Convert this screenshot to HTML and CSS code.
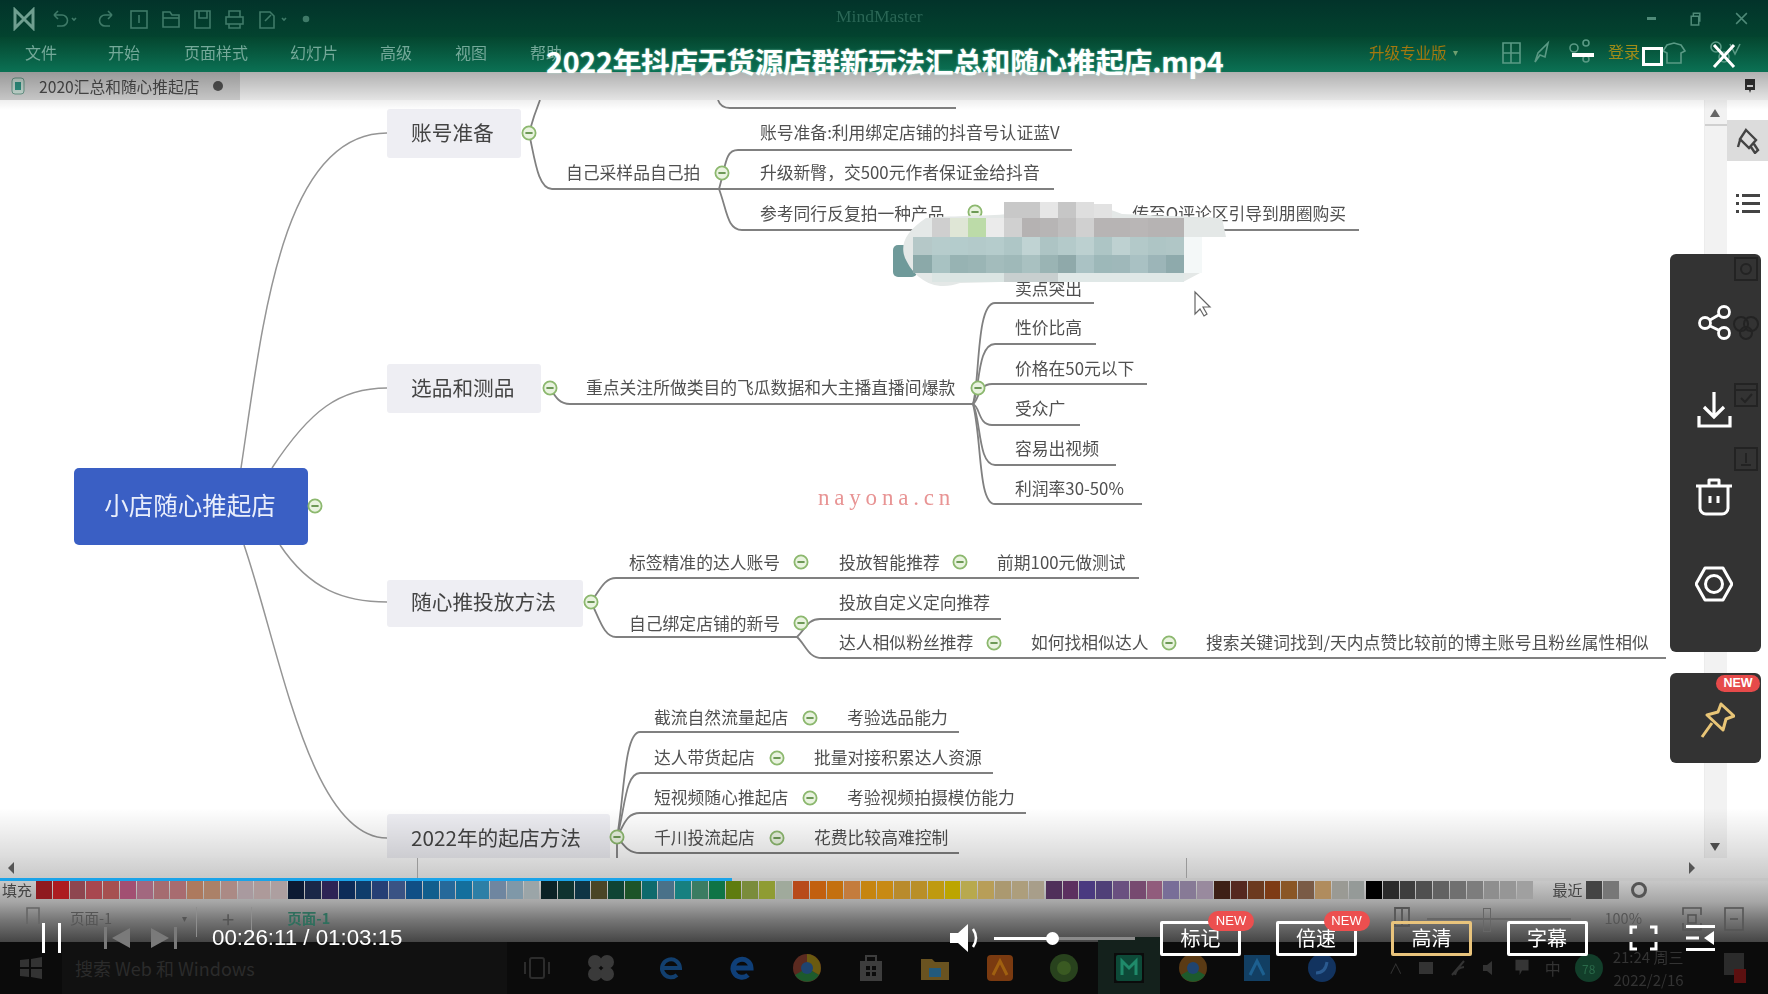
FILE: index.html
```html
<!DOCTYPE html>
<html lang="zh-CN">
<head>
<meta charset="utf-8">
<title>MindMaster</title>
<link rel="stylesheet" href="styles.css">
</head>
<body>
<div class="app">
  <header class="titlebar">
    <svg class="logo" viewBox="0 0 24 24"><path d="M3 21V3l9 9 9-9v18l-9-9z" fill="none" stroke="#6f9f90" stroke-width="3"/></svg>
    <svg class="quick" viewBox="0 0 300 24" fill="none" stroke="#3f7a68" stroke-width="1.6">
      <path d="M4 8h8a5 5 0 0 1 0 11H7M4 8l4-4M4 8l4 4"/><path d="M22 11l2 2 2-2" />
      <path d="M62 8h-7a5 5 0 0 0 0 11h5M62 8l-4-4M62 8l-4 4"/>
      <g transform="translate(-10 0)">
        <rect x="91" y="4" width="16" height="17"/><path d="M99 8v8"/>
        <path d="M123 20V5h7l2 3h7v12z"/><path d="M123 11h16"/>
        <path d="M155 4h15v17h-15zM159 4v7h8V4"/>
        <rect x="186" y="10" width="17" height="7"/><path d="M189 10V4h11v6M189 17v4h11v-4"/>
        <path d="M220 5h10l4 4v12h-14zM225 14l6-6"/><path d="M242 11l2 2 2-2"/>
      </g>
      <circle cx="256" cy="12" r="2.5" fill="#3f7a68"/>
    </svg>
    <span class="apptitle">MindMaster</span>
    <div class="winctl">
      <span class="winmin"></span>
      <svg viewBox="0 0 12 14" fill="none" stroke="#4f8a78" stroke-width="1.4"><path d="M2 5h7v8H2zM4 5V2h6v8"/></svg>
      <svg viewBox="0 0 12 14" fill="none" stroke="#4f8a78" stroke-width="1.4"><path d="M1 2l10 10M11 2L1 12"/></svg>
    </div>
  </header>

  <nav class="menubar">
    <span class="menu m1">文件</span><span class="menu m2">开始</span><span class="menu m3">页面样式</span><span class="menu m4">幻灯片</span><span class="menu m5">高级</span><span class="menu m6">视图</span><span class="menu m7">帮助</span>
    <span class="upgrade">升级专业版</span><span class="caret">▾</span>
    <svg class="menuicons" viewBox="0 0 250 26" fill="none" stroke="#5a9a85" stroke-width="1.6">
      <path d="M1 4h17v20H1zM1 14h17M9 4v20"/><path d="M33 23l3-9 10-10-3 14-5-2z"/>
      <circle cx="72" cy="9" r="4"/><circle cx="84" cy="4" r="3"/><circle cx="84" cy="20" r="3"/>
      <path d="M179 6l-7-2-7 2-4 6 4 2v10h14V14l4-2z"/>
      <circle cx="214" cy="8" r="5"/><circle cx="222" cy="18" r="5"/><path d="M228 5l5 10 5-10"/>
    </svg>
    <span class="login">登录</span>
  </nav>

  <div class="tabbar">
    <div class="tab">
      <svg class="tabicon" viewBox="0 0 16 18"><rect x="2" y="1" width="12" height="16" rx="3" fill="#cfe5dc" stroke="#6f9f90"/><rect x="5" y="5" width="6" height="8" fill="#2f9a88"/></svg>
      <span class="tabtext">2020汇总和随心推起店</span>
      <span class="tabdot"></span>
    </div>
    <svg class="pinmark" viewBox="0 0 12 14"><path d="M1 0h10v11H7l-1 3-1-3H1z" fill="#333"/><rect x="3" y="6" width="6" height="2" fill="#eee"/></svg>
  </div>

  <main class="work">
    <svg class="map" viewBox="0 100 1704 758" width="1704" height="758">
      <defs>
        <g id="fold"><circle r="6.6" fill="#e9f3df" stroke="#8cb86e" stroke-width="1.8"/><path d="M-3.6 0h7.2" stroke="#5f8f47" stroke-width="1.8"/></g>
      </defs>

      <g class="edge0">
        <path d="M241 468C262 330 280 133 387 133"/>
        <path d="M272 468C310 410 340 388 387 388"/>
        <path d="M280 545C310 590 345 602 387 602"/>
        <path d="M244 545C280 650 310 838 387 838"/>
      </g>

      <g class="edge">
        <path d="M529 133Q534 115 540 100"/>
        <path d="M529 133C535 160 538 189 552 189H719"/>
        <path d="M718 100C720 106 724 108 730 108H956"/>
        <path d="M719 189C726 165 725 150 738 150H1072"/>
        <path d="M719 189H1054"/>
        <path d="M719 189C727 210 727 230 742 230H1359"/>

        <path d="M550 388C556 398 560 404 570 404H973"/>
        <path d="M973 404C980 380 976 303 995 303H1094"/>
        <path d="M973 404C980 390 977 344 995 344H1096"/>
        <path d="M973 404C979 400 978 384 992 384H1147"/>
        <path d="M973 404C980 406 978 425 992 425H1080"/>
        <path d="M973 404C981 420 978 465 995 465H1116"/>
        <path d="M973 404C982 440 978 504 995 504H1142"/>

        <path d="M591 602C600 590 604 578 616 578H1139"/>
        <path d="M591 602C600 620 604 637 616 637H797"/>
        <path d="M797 637C806 628 808 619 820 619H1001"/>
        <path d="M797 637C806 645 808 658 822 658H1666"/>

        <path d="M617 837C624 800 624 732 640 732H959"/>
        <path d="M617 837C625 810 625 773 640 773H993"/>
        <path d="M617 837C624 825 626 813 640 813H1026"/>
        <path d="M617 837C624 845 628 853 640 853H959"/>
        <path d="M617 837V858"/>
      </g>

      <rect class="root" x="74" y="468" width="234" height="77" rx="5"/>
      <text class="troot" x="190" y="515" text-anchor="middle">小店随心推起店</text>

      <rect class="topic" x="387" y="109" width="134" height="49" rx="3"/>
      <rect class="topic" x="387" y="364" width="154" height="49" rx="3"/>
      <rect class="topic" x="387" y="580" width="196" height="47" rx="3"/>
      <rect class="topic" x="387" y="814" width="223" height="48" rx="3"/>
      <text class="tt" x="411" y="141">账号准备</text>
      <text class="tt" x="411" y="396">选品和测品</text>
      <text class="tt" x="411" y="610">随心推投放方法</text>
      <text class="tt" x="411" y="846">2022年的起店方法</text>

      <g class="t">
        <text x="566" y="179">自己采样品自己拍</text>
        <text x="760" y="139">账号准备:利用绑定店铺的抖音号认证蓝V</text>
        <text x="760" y="179">升级新臀，交500元作者保证金给抖音</text>
        <text x="760" y="220">参考同行反复拍一种产品</text>
        <text x="1346" y="220" text-anchor="end">传至Q评论区引导到朋圈购买</text>

        <text x="586" y="394">重点关注所做类目的飞瓜数据和大主播直播间爆款</text>
        <text x="1015" y="295">卖点突出</text>
        <text x="1015" y="334">性价比高</text>
        <text x="1015" y="375">价格在50元以下</text>
        <text x="1015" y="415">受众广</text>
        <text x="1015" y="455">容易出视频</text>
        <text x="1015" y="495">利润率30-50%</text>

        <text x="629" y="569">标签精准的达人账号</text>
        <text x="839" y="569">投放智能推荐</text>
        <text x="997" y="569">前期100元做测试</text>
        <text x="629" y="630">自己绑定店铺的新号</text>
        <text x="839" y="609">投放自定义定向推荐</text>
        <text x="839" y="649">达人相似粉丝推荐</text>
        <text x="1031" y="649">如何找相似达人</text>
        <text x="1206" y="649">搜索关键词找到/天内点赞比较前的博主账号且粉丝属性相似</text>

        <text x="654" y="724">截流自然流量起店</text>
        <text x="847" y="724">考验选品能力</text>
        <text x="654" y="764">达人带货起店</text>
        <text x="814" y="764">批量对接积累达人资源</text>
        <text x="654" y="804">短视频随心推起店</text>
        <text x="847" y="804">考验视频拍摄模仿能力</text>
        <text x="654" y="844">千川投流起店</text>
        <text x="814" y="844">花费比较高难控制</text>
      </g>

      <use href="#fold" x="315" y="506"/>
      <use href="#fold" x="529" y="133"/>
      <use href="#fold" x="722" y="173"/>
      <use href="#fold" x="975" y="212"/>
      <use href="#fold" x="550" y="388"/>
      <use href="#fold" x="978" y="388"/>
      <use href="#fold" x="591" y="602"/>
      <use href="#fold" x="801" y="562"/>
      <use href="#fold" x="960" y="562"/>
      <use href="#fold" x="801" y="623"/>
      <use href="#fold" x="994" y="643"/>
      <use href="#fold" x="1169" y="643"/>
      <use href="#fold" x="617" y="837"/>
      <use href="#fold" x="810" y="718"/>
      <use href="#fold" x="777" y="758"/>
      <use href="#fold" x="810" y="798"/>
      <use href="#fold" x="777" y="838"/>

      <g class="mosaic">
        <rect x="893" y="245" width="24" height="32" rx="5" fill="#6f9a9a"/>
        <path d="M926 218C945 216 985 216 1010 214L1065 202C1085 202 1105 207 1122 214L1222 218 1226 237 1200 237 1200 273 1183 282 1000 282 960 283C935 292 915 280 905 258 900 245 905 232 926 218Z" fill="#e4e8e7"/>
        <g fill="#c8c8c8">
          <rect x="1004" y="202" width="18" height="16"/><rect x="1022" y="202" width="18" height="16"/>
          <rect x="1040" y="202" width="18" height="16" fill="#e6e6e6"/><rect x="1058" y="202" width="18" height="16" fill="#c6c6c6"/>
          <rect x="1076" y="202" width="18" height="16" fill="#dedede"/><rect x="1094" y="204" width="18" height="14" fill="#e2e2e2"/>
          <rect x="932" y="218" width="18" height="19" fill="#cfcfcf"/><rect x="950" y="218" width="18" height="19" fill="#dfe6d6"/>
          <rect x="968" y="218" width="18" height="19" fill="#bcdba8"/><rect x="986" y="218" width="18" height="19" fill="#ebebeb"/>
          <rect x="1004" y="218" width="18" height="19" fill="#d0d0d0"/><rect x="1022" y="218" width="18" height="19" fill="#b5b2b2"/>
          <rect x="1040" y="218" width="18" height="19" fill="#b7b5b5"/><rect x="1058" y="218" width="18" height="19" fill="#bfbebe"/>
          <rect x="1076" y="218" width="18" height="19" fill="#d0d0d0"/><rect x="1094" y="218" width="18" height="19" fill="#b7b4b4"/>
          <rect x="1112" y="218" width="18" height="19" fill="#b7b4b4"/><rect x="1130" y="218" width="18" height="19" fill="#b9b6b6"/>
          <rect x="1148" y="218" width="18" height="19" fill="#b6b3b3"/><rect x="1166" y="218" width="18" height="19" fill="#b6b3b3"/>
        </g>
        <g>
          <rect x="913" y="237" width="19" height="18" fill="#b5c8c8"/><rect x="932" y="237" width="18" height="18" fill="#b6cccc"/>
          <rect x="950" y="237" width="18" height="18" fill="#b4cccc"/><rect x="968" y="237" width="18" height="18" fill="#b3caca"/>
          <rect x="986" y="237" width="18" height="18" fill="#b5cccc"/><rect x="1004" y="237" width="18" height="18" fill="#aec6c6"/>
          <rect x="1022" y="237" width="18" height="18" fill="#c0d3d3"/><rect x="1040" y="237" width="18" height="18" fill="#adc4c4"/>
          <rect x="1058" y="237" width="18" height="18" fill="#b4caca"/><rect x="1076" y="237" width="18" height="18" fill="#bcd0d0"/>
          <rect x="1094" y="237" width="18" height="18" fill="#adc5c5"/><rect x="1112" y="237" width="18" height="18" fill="#bed1d1"/>
          <rect x="1130" y="237" width="18" height="18" fill="#b3c9c9"/><rect x="1148" y="237" width="18" height="18" fill="#aec5c5"/>
          <rect x="1166" y="237" width="18" height="18" fill="#b0c6c6"/><rect x="1184" y="237" width="18" height="36" fill="#f4f8f8"/>
          <rect x="913" y="255" width="19" height="18" fill="#8ba9a9"/><rect x="932" y="255" width="18" height="18" fill="#a8c2c2"/>
          <rect x="950" y="255" width="18" height="18" fill="#97b3b3"/><rect x="968" y="255" width="18" height="18" fill="#9ab5b5"/>
          <rect x="986" y="255" width="18" height="18" fill="#a3bcbc"/><rect x="1004" y="255" width="18" height="18" fill="#9fb9b9"/>
          <rect x="1022" y="255" width="18" height="18" fill="#a9c1c1"/><rect x="1040" y="255" width="18" height="18" fill="#9ab4b4"/>
          <rect x="1058" y="255" width="18" height="18" fill="#8fa9aa"/><rect x="1076" y="255" width="18" height="18" fill="#aac2c4"/>
          <rect x="1094" y="255" width="18" height="18" fill="#9db8b9"/><rect x="1112" y="255" width="18" height="18" fill="#9fb8ba"/>
          <rect x="1130" y="255" width="18" height="18" fill="#a9c1c3"/><rect x="1148" y="255" width="18" height="18" fill="#9cb5b8"/>
          <rect x="1166" y="255" width="18" height="18" fill="#8eaaac"/>
          <rect x="932" y="273" width="72" height="9" fill="#dbe5e3"/><rect x="1004" y="273" width="54" height="9" fill="#c8cfcf"/>
          <rect x="1058" y="273" width="126" height="9" fill="#e0e8e7"/>
        </g>
      </g>

      <path class="cursor" d="M1195 292v22l5-5 4 7 3-2-4-7h7z"/>
      <text class="mark" x="818" y="505">nayona.cn</text>
    </svg>

    <div class="vscroll">
      <svg class="vs-up" viewBox="0 0 12 10"><path d="M6 1l5 8H1z" fill="#666"/></svg>
      <span class="vs-rule"></span>
      <span class="vs-grow"></span>
      <svg class="vs-down" viewBox="0 0 12 10"><path d="M6 9L1 1h10z" fill="#555"/></svg>
    </div>

    <aside class="sidetools">
      <div class="tool-on">
        <svg viewBox="0 0 24 26" fill="none" stroke="#444" stroke-width="2.4"><path d="M10 2l10 10-7 8-9-9zM4 12l-2 7M18 16l4 6-3 3-4-6"/></svg>
      </div>
      <svg class="tool-list" viewBox="0 0 24 22" fill="#444"><rect x="6" y="1" width="18" height="3"/><rect x="6" y="9" width="18" height="3"/><rect x="6" y="17" width="18" height="3"/><rect y="1" width="3" height="3"/><rect y="9" width="3" height="3"/><rect y="17" width="3" height="3"/></svg>
    </aside>
  </main>

  <section class="bottom">
    <div class="hscroll">
      <svg class="hs-left" viewBox="0 0 8 12"><path d="M7 0L1 6l6 6z" fill="#555"/></svg>
      <span class="hs-mark1"></span>
      <span class="hs-mark2"></span>
      <svg class="hs-right" viewBox="0 0 8 12"><path d="M1 0l6 6-6 6z" fill="#555"/></svg>
    </div>
    <div class="progress"><div class="progress-fill"></div></div>
    <div class="palette">
      <span class="fill-label">填充</span>
      <div class="swatches">
        <i style="background:#8f1a1f"></i><i style="background:#ad1c20"></i><i style="background:#8e4650"></i><i style="background:#a8474f"></i><i style="background:#a65050"></i><i style="background:#a24f72"></i><i style="background:#a2687f"></i><i style="background:#a56c70"></i><i style="background:#a86c70"></i><i style="background:#ad7a5e"></i><i style="background:#ab8168"></i><i style="background:#ab8a85"></i><i style="background:#a99a9f"></i><i style="background:#ad9a9a"></i><i style="background:#ad9fa0"></i>
      </div>
      <div class="swatches">
        <i style="background:#0c1a33"></i><i style="background:#1a2747"></i><i style="background:#2d2355"></i><i style="background:#0d2c58"></i><i style="background:#0f3d6b"></i><i style="background:#263f75"></i><i style="background:#3a5384"></i><i style="background:#104f86"></i><i style="background:#115e8d"></i><i style="background:#26699a"></i><i style="background:#146f9d"></i><i style="background:#2d7fa6"></i><i style="background:#6f86a0"></i><i style="background:#7f98a8"></i><i style="background:#9ba5a8"></i>
      </div>
      <div class="swatches">
        <i style="background:#0b2226"></i><i style="background:#0f3330"></i><i style="background:#0f3545"></i><i style="background:#4a4526"></i><i style="background:#0f4434"></i><i style="background:#1d5428"></i><i style="background:#0f6a6c"></i><i style="background:#4a7189"></i><i style="background:#178080"></i><i style="background:#3b7c62"></i><i style="background:#0f7446"></i><i style="background:#5f7c10"></i><i style="background:#7a8c3c"></i><i style="background:#8f9c33"></i><i style="background:#a0aa9c"></i>
      </div>
      <div class="swatches">
        <i style="background:#b84a1a"></i><i style="background:#c2600f"></i><i style="background:#c4700f"></i><i style="background:#c47c3d"></i><i style="background:#c68510"></i><i style="background:#c88a14"></i><i style="background:#b98b2c"></i><i style="background:#b98f28"></i><i style="background:#bf9a10"></i><i style="background:#bca500"></i><i style="background:#b8a94e"></i><i style="background:#b89e58"></i><i style="background:#ab9970"></i><i style="background:#ad9e7c"></i><i style="background:#a89e8a"></i>
      </div>
      <div class="swatches">
        <i style="background:#50305a"></i><i style="background:#5c3060"></i><i style="background:#4a3a80"></i><i style="background:#504078"></i><i style="background:#6a5080"></i><i style="background:#774a70"></i><i style="background:#915c7c"></i><i style="background:#786e98"></i><i style="background:#877a96"></i><i style="background:#998a9e"></i>
      </div>
      <div class="swatches">
        <i style="background:#3e2016"></i><i style="background:#55281f"></i><i style="background:#6c3a1f"></i><i style="background:#7e3b15"></i><i style="background:#8a5625"></i><i style="background:#7a5b46"></i><i style="background:#b08c5e"></i><i style="background:#9a9a94"></i><i style="background:#959a98"></i>
      </div>
      <div class="swatches">
        <i style="background:#000"></i><i style="background:#2a2a2a"></i><i style="background:#3e3e3e"></i><i style="background:#505050"></i><i style="background:#626262"></i><i style="background:#707070"></i><i style="background:#7d7d7d"></i><i style="background:#8e8e8e"></i><i style="background:#969696"></i><i style="background:#a0a0a0"></i>
      </div>
      <span class="recent">最近</span>
      <div class="swatches">
        <i style="background:#444"></i><i style="background:#777"></i>
      </div>
      <svg class="wheel" viewBox="0 0 18 18"><circle cx="9" cy="9" r="6.5" fill="none" stroke="#555" stroke-width="3"/></svg>
    </div>
    <div class="statusbar">
      <svg class="st-page" viewBox="0 0 14 18"><path d="M1 17V1h12v16" fill="none" stroke="#666" stroke-width="1.6"/></svg>
      <span class="st-name">页面-1</span>
      <span class="st-caret">▾</span>
      <span class="st-sep"></span>
      <span class="st-plus">+</span>
      <span class="st-sep"></span>
      <span class="st-tab">页面-1</span>
      <span class="st-grow"></span>
      <svg class="st-icon" viewBox="0 0 18 20" fill="none" stroke="#555" stroke-width="1.8"><path d="M2 1h14v18H2zM9 1v18"/></svg>
      <span class="st-zoom"></span>
      <span class="st-pct">100%</span>
      <svg class="st-fit" viewBox="0 0 20 24" fill="none" stroke="#555" stroke-width="1.6"><path d="M1 8V1h18v7M1 16v7h18v-7"/><rect x="6" y="8" width="8" height="8"/></svg>
      <svg class="st-full" viewBox="0 0 20 24" fill="none" stroke="#555" stroke-width="1.6"><rect x="1" y="1" width="18" height="22"/><path d="M6 12h8"/></svg>
    </div>
  </section>

  <footer class="taskbar">
    <svg class="tb-win" viewBox="0 0 22 22" fill="#333"><path d="M0 3l9-1v8H0zM11 2l11-2v10H11zM0 12h9v8l-9-1zM11 12h11v10l-11-2z"/></svg>
    <div class="tb-search">搜索 Web 和 Windows</div>
    <div class="tb-apps">
      <svg viewBox="0 0 30 30" fill="none" stroke="#2c2c2c" stroke-width="2"><rect x="8" y="5" width="14" height="20" rx="2"/><path d="M3 9v12M27 9v12"/></svg>
      <svg viewBox="0 0 30 30" fill="#3a3a3a"><circle cx="9" cy="9" r="7"/><circle cx="21" cy="9" r="7"/><circle cx="9" cy="21" r="7"/><circle cx="21" cy="21" r="7"/></svg>
      <svg class="tb-e" viewBox="0 0 30 30" fill="none" stroke="#123f6e" stroke-width="4"><path d="M7 15h17a9 9 0 1 0-3 7"/></svg>
      <svg viewBox="0 0 30 30" fill="none" stroke="#0f3f78" stroke-width="5"><path d="M6 15h18a9 9 0 1 0-3 7"/></svg>
      <svg viewBox="0 0 30 30"><circle cx="15" cy="15" r="14" fill="#5b2a20"/><path d="M15 1a14 14 0 0 1 12 21L15 15z" fill="#6a5a10"/><path d="M3 22a14 14 0 0 0 24 0L15 15z" fill="#1d5a2c"/><circle cx="15" cy="15" r="6" fill="#1f4470"/></svg>
      <svg viewBox="0 0 30 30" fill="#3d3d3d"><path d="M4 8h22v20H4z"/><path d="M10 8V3h10v5" fill="none" stroke="#3d3d3d" stroke-width="2"/><rect x="10" y="13" width="4" height="4" fill="#0b0b0b"/><rect x="16" y="13" width="4" height="4" fill="#0b0b0b"/><rect x="10" y="19" width="4" height="4" fill="#0b0b0b"/><rect x="16" y="19" width="4" height="4" fill="#0b0b0b"/></svg>
      <svg viewBox="0 0 30 30"><path d="M1 6h11l3 3h14v18H1z" fill="#6a5320"/><rect x="9" y="15" width="12" height="9" fill="#235a7c"/></svg>
      <svg viewBox="0 0 30 30"><rect x="2" y="2" width="26" height="26" rx="4" fill="#7a3a10"/><path d="M8 22l7-14 7 14" fill="none" stroke="#a06010" stroke-width="3"/></svg>
      <svg viewBox="0 0 30 30"><circle cx="15" cy="15" r="14" fill="#28421d"/><circle cx="15" cy="15" r="7" fill="#3a5a22"/></svg>
      <svg class="tb-active" viewBox="0 0 30 30"><rect x="2" y="2" width="26" height="26" rx="2" fill="#0d4a38"/><path d="M8 22V8l7 7 7-7v14" fill="none" stroke="#1f8a6a" stroke-width="3"/></svg>
      <svg viewBox="0 0 30 30"><circle cx="15" cy="15" r="14" fill="#5a3a14"/><path d="M3 22a14 14 0 0 0 24 0L15 15z" fill="#1d5a2c"/><circle cx="15" cy="15" r="6" fill="#1f4470"/></svg>
      <svg viewBox="0 0 30 30"><rect x="2" y="2" width="26" height="26" fill="#123f63"/><path d="M8 22L15 8l7 14" fill="none" stroke="#1d6090" stroke-width="3"/></svg>
      <svg viewBox="0 0 30 30"><circle cx="15" cy="15" r="14" fill="#12335f"/><path d="M9 20c6 0 10-4 11-11" fill="none" stroke="#2a5a90" stroke-width="3"/></svg>
    </div>
    <div class="tb-tray">
      <span class="tray-caret">∧</span>
      <svg viewBox="0 0 18 18" fill="#333"><rect x="2" y="3" width="14" height="12"/></svg>
      <svg viewBox="0 0 18 18" fill="none" stroke="#333" stroke-width="2"><path d="M3 16L15 2M6 16a10 10 0 0 1 9-8"/></svg>
      <svg viewBox="0 0 18 18" fill="#333"><path d="M2 6h4l5-4v14l-5-4H2z"/></svg>
      <svg viewBox="0 0 18 22" fill="#353535"><path d="M1 1h16v13H9l-3 6v-6H1z"/></svg>
      <span class="tray-ime">中</span>
      <span class="tray-bubble">78</span>
      <div class="tray-clock"><span>21:24 周三</span><span>2022/2/16</span></div>
      <svg class="tray-note" viewBox="0 0 22 30"><path d="M0 0h20v22H0z" fill="#2b2b2b"/><path d="M10 16h12v14H10z" fill="#5c1010"/></svg>
    </div>
  </footer>

  <div class="shade-top"></div>

  <div class="player-title">2022年抖店无货源店群新玩法汇总和随心推起店.mp4</div>
  <div class="player-win">
    <span class="pw-min"></span>
    <span class="pw-max"></span>
    <svg class="pw-close" viewBox="0 0 24 24" fill="none" stroke="#fff" stroke-width="3"><path d="M2 1l20 22M22 1L2 23"/></svg>
  </div>

  <div class="panel panel-tools">
    <svg class="ghosts" viewBox="0 0 26 216" fill="none" stroke="#232323" stroke-width="2">
      <rect x="2" y="2" width="22" height="22"/><circle cx="13" cy="13" r="5"/>
      <circle cx="8" cy="68" r="7"/><circle cx="18" cy="68" r="7"/><circle cx="13" cy="77" r="6"/>
      <rect x="2" y="128" width="22" height="22"/><path d="M2 134h22M8 142l4 4 7-8"/>
      <rect x="2" y="192" width="22" height="22"/><path d="M13 197v10M8 209h10"/>
    </svg>
    <svg viewBox="0 0 38 38" fill="none" stroke="#fff" stroke-width="2.800"><circle cx="29" cy="8" r="5.500"/><circle cx="10" cy="19" r="5.500"/><circle cx="29" cy="29" r="5.500"/><path d="M15 16l9.500-5.500M15 22l9.500 4.500"/></svg>
    <svg viewBox="0 0 38 38" fill="none" stroke="#fff" stroke-width="3.200"><path d="M19 1v25M9 16l10 10 10-10M4 25v10h31V25"/></svg>
    <svg viewBox="0 0 38 38" fill="none" stroke="#fff" stroke-width="3" stroke-linejoin="round"><path d="M1 8h36M14 8V2h10v6M5 8v22a6 6 0 0 0 6 6h16a6 6 0 0 0 6-6V8M15 18v7M23 18v7"/></svg>
    <svg viewBox="0 0 38 38" fill="none" stroke="#fff" stroke-width="3" stroke-linejoin="round"><path d="M10 3h18l9 16-9 16H10L1 19z"/><circle cx="19" cy="19" r="8.500"/></svg>
  </div>
  <div class="panel panel-pin">
    <span class="pin-new">NEW</span>
    <svg viewBox="0 0 36 38" fill="none" stroke="#e8c577" stroke-width="3" stroke-linejoin="round"><path d="M22 2l13 12-8 3-3 11L8 13l11-3zM13 21L3 35"/></svg>
  </div>

  <div class="controls">
    <svg class="c-pause" viewBox="0 0 19 30"><rect x="0" y="0" width="3" height="30" fill="#fff"/><rect x="16" y="0" width="3" height="30" fill="#fff"/></svg>
    <svg class="c-prev" viewBox="0 0 26 22" fill="#7a7a7a"><rect width="3" height="22"/><path d="M26 1v20L8 11z"/></svg>
    <svg class="c-next" viewBox="0 0 26 22" fill="#7a7a7a"><rect x="23" width="3" height="22"/><path d="M0 1v20l18-10z"/></svg>
    <span class="c-time">00:26:11 / 01:03:15</span>
    <svg class="c-speaker" viewBox="0 0 33 30"><path d="M1 10h8L19 1v28L9 20H1z" fill="#fff"/><path d="M24 6c4 6 4 12 0 18" fill="none" stroke="#fff" stroke-width="2.500"/></svg>
    <div class="c-vol"><div class="c-vol-fill"></div><span class="c-vol-knob"></span></div>
    <button class="c-btn c-first">标记<span class="c-new">NEW</span></button>
    <button class="c-btn">倍速<span class="c-new">NEW</span></button>
    <button class="c-btn c-active">高清</button>
    <button class="c-btn">字幕</button>
    <svg class="c-full" viewBox="0 0 29 26" fill="none" stroke="#fff" stroke-width="3"><path d="M8 2H2v7M21 2h6v7M8 24H2v-7M21 24h6v-7"/></svg>
    <svg class="c-list" viewBox="0 0 29 26" fill="#fff"><rect width="29" height="3"/><rect y="23" width="29" height="3"/><rect y="11.500" width="13" height="3"/><path d="M28 6v14l-10-7z"/></svg>
  </div>
</div>
</body>
</html>
```
FILE: styles.css
```css
* { box-sizing: border-box; }
html, body { margin: 0; padding: 0; }
body { background: #000; font-family: "Noto Sans CJK SC", "Liberation Sans", sans-serif; }
.app {
  position: relative;
  width: 1768px;
  height: 994px;
  overflow: hidden;
  display: flex;
  flex-direction: column;
  background: #fff;
}

/* Title bar */
.titlebar {
  position: relative;
  height: 37px;
  display: flex;
  align-items: center;
  background: linear-gradient(#02332a, #03432f);
  filter: blur(.7px);
}
.logo { width: 24px; height: 24px; margin-left: 12px; }
.quick { width: 300px; height: 24px; margin-left: 14px; }
.apptitle {
  position: absolute;
  left: 836px;
  top: 6px;
  color: #2a6655;
  font: 17.500px "Liberation Serif", serif;
}
.winctl { margin-left: auto; display: flex; align-items: center; gap: 33px; padding-right: 20px; }
.winctl svg { width: 13px; height: 15px; }
.winmin { width: 9px; height: 3px; background: #4f8a78; }

/* Menu */
.menubar {
  position: relative;
  height: 35px;
  padding-bottom: 6px;
  display: flex;
  align-items: center;
  background: linear-gradient(#04462f, #0b7154);
  color: #74a999;
  font-size: 16px;
  filter: blur(.7px);
}
.menu { white-space: nowrap; }
.m1 { margin-left: 25px; }
.m2 { margin-left: 51px; }
.m3 { margin-left: 44px; }
.m4 { margin-left: 42px; }
.m5 { margin-left: 42px; }
.m6 { margin-left: 43px; }
.m7 { margin-left: 43px; }
.upgrade { margin-left: 807px; color: #a3780f; white-space: nowrap; font-size: 15.500px; }
.caret { margin-left: 6px; color: #6f9f70; font-size: 10px; }
.menuicons { position: absolute; left: 1502px; top: 2px; width: 250px; height: 26px; }
.login { position: absolute; left: 1608px; top: 2px; color: #a08c18; font-size: 16px; }

/* Tab bar */
.tabbar {
  height: 28px;
  display: flex;
  align-items: center;
  justify-content: space-between;
  background: #f4f4f4;
}
.tab {
  width: 240px;
  height: 100%;
  display: flex;
  align-items: center;
  background: #d4d4d4;
  filter: blur(.5px);
}
.tabicon { width: 16px; height: 18px; margin-left: 10px; }
.tabtext { margin-left: 13px; color: #4c4c4c; font-size: 15.700px; white-space: nowrap; }
.tabdot { width: 10px; height: 10px; margin-left: 14px; border-radius: 50%; background: #555; }
.pinmark { width: 12px; height: 14px; margin-right: 12px; }

/* Work area */
.work { position: relative; height: 758px; display: flex; background: #fff; }
.work::after {
  content: "";
  position: absolute;
  left: 0;
  right: 0;
  bottom: 0;
  height: 50px;
  background: linear-gradient(rgba(0,0,0,0), rgba(0,0,0,.14));
  pointer-events: none;
}
.map { flex: none; display: block; filter: blur(.75px); }
.edge, .edge0 { fill: none; stroke: #808080; stroke-width: 1.800; }
.edge0 { stroke: #959595; stroke-width: 1.500; }
.root { fill: #3a5fc4; }
.troot { fill: #e9eefb; font-size: 24.500px; }
.topic { fill: #eeeef3; }
.tt { fill: #444; font-size: 20.700px; }
.t { fill: #505050; font-size: 16.800px; }
.cursor { fill: #fff; stroke: #666; stroke-width: 1.200; }
.mark { fill: #e89494; font: 23px "Liberation Serif", serif; letter-spacing: 4.800px; }

.vscroll {
  width: 23px;
  display: flex;
  flex-direction: column;
  align-items: center;
  background: #f2f2f2;
  border-left: 1px solid #ececec;
}
.vs-up { width: 12px; height: 10px; margin-top: 8px; margin-left: -2px; }
.vs-rule { width: 100%; height: 2px; margin-top: 6px; background: #d0d0d0; }
.vs-grow { flex: 1; }
.vs-down { width: 12px; height: 10px; margin-bottom: 6px; margin-left: -2px; }

.sidetools { width: 41px; display: flex; flex-direction: column; align-items: center; background: #fff; }
.tool-on {
  width: 100%;
  height: 41px;
  margin-top: 20px;
  display: flex;
  align-items: center;
  justify-content: center;
  background: #dcdcdc;
}
.tool-on svg { width: 24px; height: 26px; }
.tool-list { width: 24px; height: 22px; margin-top: 32px; }

/* Bottom strip */
.bottom {
  height: 84px;
  display: flex;
  flex-direction: column;
  background: linear-gradient(#dadada 0, #c6c6c6 24px, #a6a6a6 44px, #767676 62px, #454545 84px);
}
.hscroll { height: 20px; display: flex; align-items: center; filter: blur(.5px); }
.hs-left { width: 8px; height: 12px; margin-left: 7px; }
.hs-mark1 { width: 1px; height: 20px; margin-left: 402px; background: #999; }
.hs-mark2 { width: 1px; height: 20px; margin-left: 768px; background: #999; }
.hs-right { width: 8px; height: 12px; margin-left: 501px; }
.progress { height: 3px; background: #c4c4c4; }
.progress-fill { width: 732px; height: 100%; background: #1ba3e8; }
.palette { height: 18px; display: flex; align-items: stretch; gap: 1.500px; filter: blur(.5px); }
.fill-label { width: 34.500px; padding-left: 2px; color: #444; font-size: 15px; line-height: 18px; white-space: nowrap; }
.swatches { display: flex; gap: 1px; }
.swatches i { display: block; width: 15.800px; }
.recent { margin-left: 18px; width: 32px; color: #444; font-size: 15px; line-height: 18px; white-space: nowrap; }
.wheel { width: 18px; height: 18px; margin-left: 9.500px; }
.statusbar {
  height: 43px;
  display: flex;
  align-items: flex-start;
  padding-top: 8px;
  color: #555;
  font-size: 14.500px;
  line-height: 22px;
  filter: blur(.6px);
}
.st-page { width: 14px; height: 18px; margin-left: 26px; }
.st-name { margin-left: 30px; white-space: nowrap; }
.st-caret { margin-left: 70px; font-size: 10px; }
.st-sep { width: 1px; height: 30px; margin-left: 9px; background: #8e8e8e; }
.st-plus { margin-left: 25px; font-size: 22px; }
.st-sep + .st-plus + .st-sep { margin-left: 17px; }
.st-tab { margin-left: 35px; color: #2f6f5d; font-weight: 700; white-space: nowrap; }
.st-grow { flex: 1; }
.st-icon { width: 18px; height: 20px; margin-right: 16px; }
.st-zoom { position: relative; width: 144px; height: 2px; margin-top: 11px; background: #666; }
.st-zoom::after {
  content: "";
  position: absolute;
  left: 56px;
  top: -10px;
  width: 6px;
  height: 22px;
  border: 1px solid #666;
}
.st-pct { margin-left: 34px; white-space: nowrap; }
.st-fit { width: 20px; height: 24px; margin-left: 40px; }
.st-full { width: 20px; height: 24px; margin-left: 22px; margin-right: 24px; }

/* Taskbar */
.taskbar {
  height: 52px;
  display: flex;
  align-items: center;
  background: #0b0b0b;
  filter: blur(.6px);
}
.tb-win { width: 22px; height: 22px; margin-left: 20px; }
.tb-search {
  width: 445px;
  height: 100%;
  margin-left: 20px;
  padding-left: 13px;
  display: flex;
  align-items: center;
  background: #111;
  color: #2b2b2b;
  font-size: 18px;
  white-space: nowrap;
}
.tb-apps { display: flex; align-items: center; gap: 34.400px; margin-left: 15px; }
.tb-apps svg { width: 30px; height: 30px; }
.tb-apps .tb-e { margin-left: 5px; margin-right: 7px; }
.tb-apps .tb-active { outline: 16px solid #14211c; outline-offset: 0; }
.tb-tray { display: flex; align-items: center; margin-left: 52px; gap: 14px; color: #333; }
.tb-tray svg { width: 18px; height: 18px; flex: none; }
.tray-caret { font-size: 14px; }
.tray-ime { font-size: 16px; }
.tray-bubble {
  width: 28px;
  height: 28px;
  display: flex;
  align-items: center;
  justify-content: center;
  border-radius: 50%;
  background: #123e2a;
  color: #2a6a4a;
  font-size: 12px;
}
.tray-clock { display: flex; flex-direction: column; align-items: flex-end; margin-left: -4px; font-size: 15px; line-height: 23px; white-space: nowrap; }
.tb-tray .tray-note { width: 22px; height: 30px; margin-left: 26px; }

/* Player overlay */
.shade-top {
  position: absolute;
  left: 0;
  right: 0;
  top: 72px;
  height: 38px;
  background: linear-gradient(rgba(0,0,0,.28), rgba(0,0,0,.07) 72%, rgba(0,0,0,0));
  pointer-events: none;
}
.player-title {
  position: absolute;
  left: 546px;
  top: 39px;
  color: #fff;
  font: 700 28.600px/44px "Noto Sans CJK SC", "Liberation Sans", sans-serif;
  letter-spacing: -.2px;
  white-space: nowrap;
  text-shadow: 0 0 2px rgba(180,255,235,.7);
}
.player-win { position: absolute; left: 1572px; top: 44px; display: flex; align-items: center; height: 24px; }
.pw-min { width: 22px; height: 4px; margin-top: -3px; background: #fff; }
.pw-max { width: 21px; height: 19px; margin-left: 48px; border: 3px solid #fff; }
.pw-close { width: 24px; height: 24px; margin-left: 49px; }

.panel { position: absolute; left: 1670px; width: 91px; background: #333; border-radius: 6px; }
.panel-tools {
  top: 254px;
  height: 398px;
  padding: 50px 3px 0 0;
  display: flex;
  flex-direction: column;
  align-items: center;
  gap: 49px;
}
.panel-tools svg { width: 38px; height: 38px; flex: none; }
.panel-tools .ghosts { position: absolute; right: 2px; top: 2px; width: 26px; height: 216px; }
.panel-pin { top: 673px; height: 90px; display: flex; align-items: center; justify-content: center; padding: 2px 0 0 3px; }
.panel-pin svg { width: 36px; height: 38px; margin-top: 4px; }
.pin-new {
  position: absolute;
  right: 1px;
  top: 2px;
  width: 44px;
  height: 17px;
  border-radius: 9px;
  background: #e64a4a;
  color: #fff;
  font: 700 12.500px/17px "Liberation Sans", sans-serif;
  text-align: center;
}

.controls {
  position: absolute;
  left: 0;
  right: 0;
  top: 920px;
  height: 36px;
  padding-left: 42px;
  display: flex;
  align-items: center;
}
.c-pause { width: 19px; height: 30px; flex: none; margin-top: -1px; }
.c-prev { width: 26px; height: 22px; flex: none; margin-left: 43px; }
.c-next { width: 26px; height: 22px; flex: none; margin-left: 21px; }
.c-time {
  margin-left: 35px;
  width: 191px;
  color: #fff;
  font: 22.300px "Liberation Sans", sans-serif;
  white-space: nowrap;
}
.c-speaker { width: 33px; height: 30px; flex: none; margin-left: 546px; }
.c-vol { position: relative; width: 141px; height: 3px; margin-left: 12px; background: #8a8a8a; }
.c-vol-fill { width: 59px; height: 100%; background: #fff; }
.c-vol-knob {
  position: absolute;
  left: 52px;
  top: -5px;
  width: 13px;
  height: 13px;
  border-radius: 50%;
  background: #fff;
}
.c-btn {
  position: relative;
  width: 81px;
  height: 35px;
  flex: none;
  margin-left: 34.500px;
  padding: 0;
  background: transparent;
  border: 3px solid #fff;
  border-radius: 2px;
  color: #fff;
  font: 20px/28px "Noto Sans CJK SC", sans-serif;
}
.c-first { margin-left: 25px; }
.c-active { border-color: #e9c47c; }
.c-new {
  position: absolute;
  right: -16px;
  top: -13px;
  width: 46px;
  height: 20px;
  border-radius: 10px;
  background: #ec4f4f;
  color: #fff;
  font: 13px/20px "Liberation Sans", sans-serif;
  text-align: center;
}
.c-full { width: 29px; height: 26px; flex: none; margin-left: 41px; }
.c-list { width: 29px; height: 26px; flex: none; margin-left: 28px; }
```
